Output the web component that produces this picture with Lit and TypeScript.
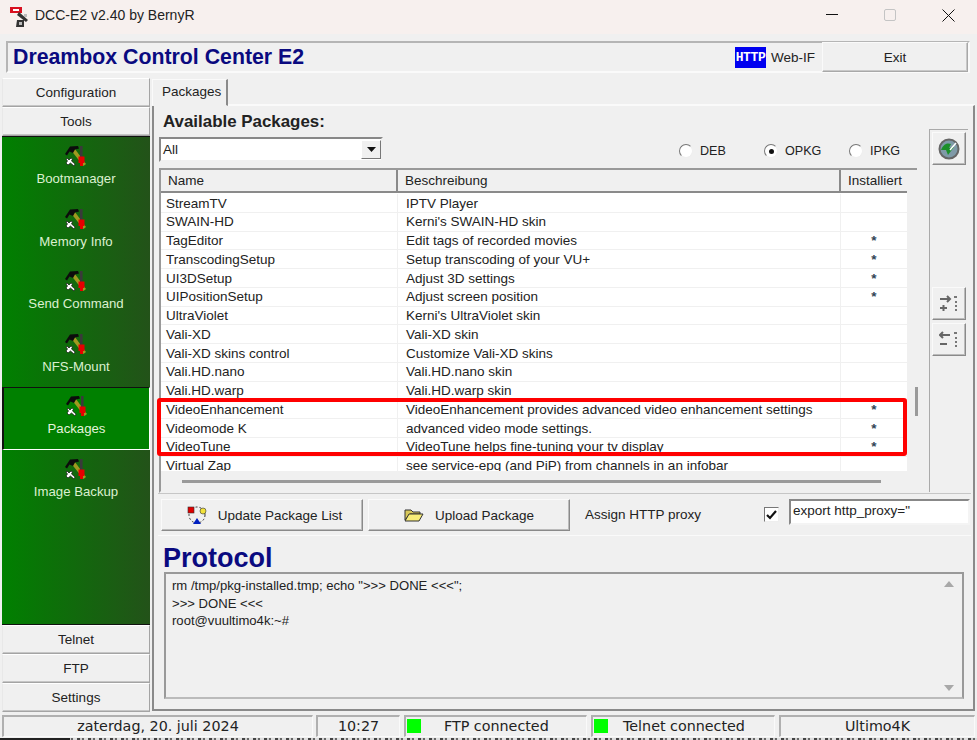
import { LitElement, html, css, svg } from "lit";
import { customElement } from "lit/decorators.js";

const rows: [string, string, string][] = [
  ["StreamTV", "IPTV Player", ""],
  ["SWAIN-HD", "Kerni's SWAIN-HD skin", ""],
  ["TagEditor", "Edit tags of recorded movies", "*"],
  ["TranscodingSetup", "Setup transcoding of your VU+", "*"],
  ["UI3DSetup", "Adjust 3D settings", "*"],
  ["UIPositionSetup", "Adjust screen position", "*"],
  ["UltraViolet", "Kerni's UltraViolet skin", ""],
  ["Vali-XD", "Vali-XD skin", ""],
  ["Vali-XD skins control", "Customize Vali-XD skins", ""],
  ["Vali.HD.nano", "Vali.HD.nano skin", ""],
  ["Vali.HD.warp", "Vali.HD.warp skin", ""],
  ["VideoEnhancement", "VideoEnhancement provides advanced video enhancement settings", "*"],
  ["Videomode K", "advanced video mode settings.", "*"],
  ["VideoTune", "VideoTune helps fine-tuning your tv display", "*"],
  ["Virtual Zap", "see service-epg (and PiP) from channels in an infobar", ""],
];

const tools = ["Bootmanager", "Memory Info", "Send Command", "NFS-Mount", "Packages", "Image Backup"];

const toolIcon = svg`<svg class="tool-icon" width="22" height="21" viewBox="0 0 22 21">
  <path d="M5 3 L8.5 1 L21 18 L18.5 20 Z" fill="#a09a20"/>
  <path d="M0 8 L5 0.5 L13 0 L14 2.5 L10 3.5 L8 7 L4.5 5.5 L2 9.5 Z" fill="#0c0c0c"/>
  <rect x="15" y="0" width="2.6" height="11" fill="#3a3a3a"/>
  <path d="M13.5 10.5 H19.5 V17 H18 V20 H15 V17 H13.5 Z" fill="#e60000"/>
  <path d="M2 12 L4 14 L6 12 L7.5 13 L6.5 15 L10 18 L9 20 L5.5 17 L3 19 L1 17 L2.5 15 L1 13 Z" fill="#fff" stroke="#111" stroke-width="0.7"/>
</svg>`;

@customElement("app-root")
export class AppRoot extends LitElement {
  static styles = css`
    :host { display: block; width: 977px; height: 740px; overflow: hidden; background: #f0f0f0;
      font: 13.5px "Liberation Sans", Arial, sans-serif; color: #222; }
    * { box-sizing: border-box; }
    .titlebar { height: 34px; background: #f7f0ee; display: flex; align-items: center; padding-left: 10px; }
    .title { font-size: 14px; color: #222; margin-left: 5px; margin-top: -4px; }
    .app-icon { margin-top: -1px; }
    .wctl { margin-left: auto; display: flex; height: 34px; }
    .wctl span { width: 58px; display: flex; align-items: center; justify-content: center; padding-bottom: 4px; }
    .header { height: 32px; margin: 7px 7px 0 6px; border: 2px solid; border-color: #b5b5b5 #fafafa #fafafa #b5b5b5; display: flex; align-items: center; }
    .brand { font: bold 21.3px "Liberation Sans", Arial, sans-serif; color: #0a0a80; padding-left: 5px; margin-top: 1px; }
    .http { margin-left: auto; width: 31px; height: 21px; background: #0000f0; color: #fff; font: bold 13px "Liberation Sans Narrow", "Liberation Mono", monospace; display: flex; align-items: center; justify-content: center; letter-spacing: -0.4px; }
    .webif { width: 56px; padding-left: 5px; }
    .exit { width: 146px; height: 30px; background: #f0f0f0; border: 1px solid; border-color: #fafafa #a8a8a8 #a8a8a8 #fafafa; box-shadow: inset -1px -1px 0 #c8c8c8; display: flex; align-items: center; justify-content: center; }
    .body { display: flex; height: 633px; margin-top: 6px; padding-left: 2px; }
    .left { width: 148px; height: 634px; display: flex; flex-direction: column; margin-top: -1px; }
    .nav { height: 29px; flex: none; display: flex; align-items: center; justify-content: center; background: #f0f0f0; border: 1px solid; border-color: #fff #a4a4a4 #a4a4a4 #e8e8e8; box-shadow: inset 0 -1px 0 #c6c6c6; }
    .green { flex: 1; border-top: 1px solid #111; border-bottom: 1px solid #111; background: linear-gradient(90deg, #008000, #235219); display: flex; flex-direction: column; min-height: 0; }
    .tool { height: 62.6px; flex: none; display: flex; flex-direction: column; align-items: center; color: #dcf0d0; padding-top: 9px; gap: 4px; font-size: 13.2px; }
    .tool.on { background: #008000; border: 1px solid; border-color: #111 #fff #fff #111; border-left-width: 2px; padding-top: 8px; color: #e4f4dc; }
    .right { width: 823px; margin-left: 2px; display: flex; flex-direction: column; }
    .tabs { height: 26px; flex: none; display: flex; border-bottom: 1px solid #fafafa; }
    .tab { width: 76px; height: 27px; padding-left: 9px; display: flex; align-items: center; background: #f0f0f0; border: 1px solid; border-color: #fafafa #8a8a8a transparent #fafafa; border-right-width: 2px; padding-bottom: 2px; z-index: 1; }
    .page { height: 606px; border: 2px solid; border-color: #fafafa #8a8a8a #8a8a8a #8a8a8a; border-top-width: 1px; display: flex; flex-direction: column; padding: 0 0 0 4px; }
    .content { flex: none; height: 387px; display: flex; }
    .main { width: 771px; flex: none; }
    .avail { font: bold 16.9px "Liberation Sans", Arial, sans-serif; color: #222; height: 30px; display: flex; align-items: center; padding: 2px 0 0 5px; }
    .filter { display: flex; align-items: center; height: 26px; }
    .combo { width: 224px; flex: none; height: 25px; margin-left: 1px; background: #fff; border: 2px solid; border-color: #888 #f0f0f0 #f0f0f0 #888; display: flex; align-items: center; padding-left: 2px; }
    .arrow { margin-left: auto; width: 20px; height: 19px; background: #f0f0f0; border: 1px solid; border-color: #fff #777 #777 #fff; display: flex; align-items: center; justify-content: center; }
    .radios { margin-left: 296px; display: flex; flex: none; padding-top: 4px; font-size: 12.6px; }
    .radio { display: flex; align-items: center; width: 85px; flex: none; gap: 7px; }
    .radio:last-child { width: 60px; }
    .radio i { width: 14px; height: 14px; border-radius: 50%; background: #fff; border: 1px solid; border-color: #777 #eee #eee #777; display: flex; align-items: center; justify-content: center; }
    .radio i b { width: 5px; height: 5px; background: #111; border-radius: 50%; }
    .grid { position: relative; width: 758px; height: 325px; margin: 6px 0 0 1px; border: 2px solid; border-color: #999 #f0f0f0 #f0f0f0 #999; border-right: none; }
    .gh { display: flex; height: 23px; background: #f0f0f0; }
    .gh span { display: flex; align-items: center; padding-left: 7px; border-right: 2px solid #8a8a8a; border-bottom: 2px solid #8a8a8a; }
    .c1 { width: 237px; flex: none; } .c2 { width: 443px; flex: none; } .c3 { width: 66px; flex: none; }
    .gh .c3 { border-right: none; padding-left: 7px; }
    .gb { height: 278px; padding-top: 1.2px; overflow: hidden; background: #fff; width: 746px; }
    .gr { display: flex; height: 18.75px; border-bottom: 1px solid #f0f0f0; }
    .gr span { display: flex; align-items: center; white-space: nowrap; padding-left: 5px; border-right: 1px solid #f0f0f0; }
    .gr .c2 { padding-left: 8px; }
    .gr .c3 { border: none; justify-content: center; padding: 0; color: #345; font-weight: bold; }
    .hbar { height: 3px; margin: 9px 0 0 21px; width: 699px; background: #9a9a9a; }
    .vthumb { position: absolute; left: 754px; top: 217px; width: 3px; height: 29px; background: #9a9a9a; }
    .mark { position: absolute; left: -4px; top: 228px; width: 750px; height: 58px; border: 4px solid #f00; border-radius: 3px; }
    .side { width: 39px; height: 363px; margin-top: 23px; border: 1px solid #aaa; border-bottom: none; border-right: none; padding: 2px 0 0 2px; display: flex; flex-direction: column; }
    .sbtn { width: 34px; height: 33px; flex: none; background: #f0f0f0; border: 1px solid; border-color: #fafafa #8a8a8a #8a8a8a #fafafa; box-shadow: inset -1px -1px 0 #bbb; display: flex; align-items: center; justify-content: center; }
    .side .plus { margin-top: 122px; }
    .side .minus { margin-top: 3px; }
    .actions { flex: none; height: 43px; display: flex; align-items: center; padding-left: 3px; border-top: 1px solid #c6c6c6; border-bottom: 1px solid #fafafa; margin-right: 2px; }
    .btn { width: 202px; height: 32px; margin-top: 1px; flex: none; background: #f0f0f0; border: 1px solid; border-color: #fafafa #8a8a8a #8a8a8a #fafafa; box-shadow: inset -1px -1px 0 #bbb; display: flex; align-items: center; justify-content: center; gap: 11px; margin-right: 5px; }
    .btn.first { padding-left: 5px; }
    .proxy { margin-left: 10px; width: 179px; flex: none; }
    .check { width: 15px; height: 15px; flex: none; background: #fff; border: 1px solid; border-color: #777 #eee #eee #777; display: flex; align-items: center; justify-content: center; }
    .input { width: 181px; height: 26px; flex: none; margin-left: 10px; margin-top: -5px; background: #fff; border: 2px solid; border-color: #888 #f4f4f4 #f4f4f4 #888; padding: 0 0 3px 2px; display: flex; align-items: center; }
    .proto { flex: 1; margin: 4px 0 0 0; display: flex; flex-direction: column; }
    .proto h2 { margin: 0; height: 32px; font: bold 27px "Liberation Sans", Arial, sans-serif; color: #0a0a80; padding-left: 5px; line-height: 37px; flex: none; }
    .memo { height: 127px; margin: 0 0 0 6px; width: 800px; border: 2px solid; border-color: #999 #999 #bbb #999; padding: 3px 6px; position: relative; font-size: 13.1px; line-height: 17.6px; }
    .sb { position: absolute; right: 7px; top: 7px; bottom: 6px; width: 12px; display: flex; flex-direction: column; justify-content: space-between; align-items: center; }
    .status { display: flex; height: 22px; margin-top: 3px; padding-left: 2px; font: 14.3px "DejaVu Sans", sans-serif; }
    .cell { display: flex; align-items: center; justify-content: center; border: 1px solid; border-color: #b0b0b0 #fafafa #fafafa #b0b0b0; border-top-width: 2px; border-left-width: 2px; flex: none; padding-bottom: 1px; }
    .date { width: 311px; margin-right: 3px; }
    .time { width: 84px; margin-right: 4px; }
    .ftp { width: 183px; margin-right: 4px; }
    .tel { width: 184px; margin-right: 4px; }
    .dev { width: 196px; }
    .led { width: 14px; height: 14px; background: #00ff00; margin-left: 1px; flex: none; }
    .ledcell { justify-content: flex-start; gap: 15px; }
    .ftp { gap: 23px; }
    .strip { height: 4px; margin-top: 1px; background: linear-gradient(90deg, #222 0 70px, transparent 70px), repeating-linear-gradient(90deg, #444 0 3px, #ccc 3px 5px, #666 5px 7px, #ddd 7px 11px); }
  `;

  render() {
    return html`
      <div class="titlebar">
        <svg class="app-icon" width="20" height="22" viewBox="0 0 20 22">
          <rect x="0" y="1" width="12" height="6" fill="#d81020"/><rect x="3" y="3" width="6" height="2" fill="#fff"/>
          <path d="M9 6 L18 14 L16 16 L7 9 Z M7 14 h7 v7 h-8 z" fill="#333"/>
          <path d="M9 16 h3 v3 h-3 z M14 8 h3 v3 h-3 z" fill="#bbb"/>
        </svg>
        <span class="title">DCC-E2 v2.40 by BernyR</span>
        <div class="wctl">
          <span><svg width="12" height="2" viewBox="0 0 12 2"><rect width="12" height="1" fill="#111"/></svg></span>
          <span><svg width="12" height="12" viewBox="0 0 12 12"><rect x=".5" y=".5" width="11" height="11" rx="1.5" fill="none" stroke="#c4c4c4"/></svg></span>
          <span><svg width="13" height="13" viewBox="0 0 13 13"><path d="M.5 .5 L12.5 12.5 M12.5 .5 L.5 12.5" stroke="#111" stroke-width="1"/></svg></span>
        </div>
      </div>
      <div class="header">
        <span class="brand">Dreambox Control Center E2</span>
        <span class="http">HTTP</span>
        <span class="webif">Web-IF</span>
        <span class="exit">Exit</span>
      </div>
      <div class="body">
        <div class="left">
          <div class="nav">Configuration</div>
          <div class="nav">Tools</div>
          <div class="green">
            ${tools.map((t) => html`<div class="tool ${t === "Packages" ? "on" : ""}">${toolIcon}<span>${t}</span></div>`)}
          </div>
          <div class="nav">Telnet</div>
          <div class="nav">FTP</div>
          <div class="nav">Settings</div>
        </div>
        <div class="right">
          <div class="tabs"><div class="tab">Packages</div></div>
          <div class="page">
            <div class="content">
              <div class="main">
                <div class="avail">Available Packages:</div>
                <div class="filter">
                  <div class="combo">All<span class="arrow"><svg width="9" height="5" viewBox="0 0 9 5"><path d="M0 0 H9 L4.5 5 Z" fill="#111"/></svg></span></div>
                  <div class="radios">
                    <label class="radio"><i></i>DEB</label>
                    <label class="radio"><i><b></b></i>OPKG</label>
                    <label class="radio"><i></i>IPKG</label>
                  </div>
                </div>
                <div class="grid">
                  <div class="gh"><span class="c1">Name</span><span class="c2">Beschreibung</span><span class="c3">Installiert</span></div>
                  <div class="gb">
                    ${rows.map((r) => html`<div class="gr"><span class="c1">${r[0]}</span><span class="c2">${r[1]}</span><span class="c3">${r[2]}</span></div>`)}
                  </div>
                  <div class="hbar"></div>
                  <div class="vthumb"></div>
                  <div class="mark"></div>
                </div>
              </div>
              <div class="side">
                <div class="sbtn">
                  <svg width="22" height="22" viewBox="0 0 22 22"><circle cx="11" cy="11" r="9.5" fill="#7f9aa8" stroke="#666" stroke-width="2"/><path d="M3 12 C6 5 10 5 13 6 L11 10 L16 9 L10 17 L8 12 Z" fill="#1c8f2a"/><path d="M12 12 L18 5" stroke="#fff" stroke-width="1.5"/></svg>
                </div>
                <div class="sbtn plus">
                  <svg width="20" height="18" viewBox="0 0 20 18"><path d="M1 4 H11 M8 1 L11 4 L8 7 M1 13 H8 M4.5 10 V16" stroke="#666" stroke-width="2" fill="none"/><path d="M15 1 h3 v2 h-3 z M16 6 h2 v2 h-2 z M16 10 h2 v2 h-2 z M16 14 h2 v2 h-2 z" fill="#777"/></svg>
                </div>
                <div class="sbtn minus">
                  <svg width="20" height="18" viewBox="0 0 20 18"><path d="M11 4 H1 M4 1 L1 4 L4 7 M1 13 H8" stroke="#666" stroke-width="2" fill="none"/><path d="M15 1 h3 v2 h-3 z M16 6 h2 v2 h-2 z M16 10 h2 v2 h-2 z M16 14 h2 v2 h-2 z" fill="#777"/></svg>
                </div>
              </div>
            </div>
            <div class="actions">
              <div class="btn first">
                <svg width="20" height="20" viewBox="0 0 20 20"><circle cx="10" cy="10" r="8" fill="none" stroke="#333" stroke-dasharray="2 2"/><rect x="1" y="2" width="6" height="6" fill="#e00000" stroke="#333" stroke-width=".6"/><circle cx="16" cy="6" r="3" fill="#f2e23a" stroke="#333" stroke-width=".6"/><path d="M6 19 L10 13 L14 19 Z" fill="#0020c0"/></svg>
                Update Package List
              </div>
              <div class="btn">
                <svg width="20" height="14" viewBox="0 0 20 14"><path d="M1 2 H7 L9 4 H16 V6 H6 L1 12 Z" fill="#d8c85a" stroke="#333"/><path d="M1 13 L5 6 H19 L15 13 Z" fill="#f7ec78" stroke="#333"/></svg>
                Upload Package
              </div>
              <span class="proxy">Assign HTTP proxy</span>
              <span class="check"><svg width="11" height="10" viewBox="0 0 11 10"><path d="M1 5 L4 8 L10 1" stroke="#111" stroke-width="2.2" fill="none"/></svg></span>
              <div class="input">export http_proxy="</div>
            </div>
            <div class="proto">
              <h2>Protocol</h2>
              <div class="memo">
                <div>rm /tmp/pkg-installed.tmp; echo "&gt;&gt;&gt; DONE &lt;&lt;&lt;";</div>
                <div>&gt;&gt;&gt; DONE &lt;&lt;&lt;</div>
                <div>root@vuultimo4k:~#</div>
                <div class="sb">
                  <svg width="10" height="6" viewBox="0 0 10 6"><path d="M0 6 H10 L5 0 Z" fill="#a8a8a8"/></svg>
                  <svg width="10" height="6" viewBox="0 0 10 6"><path d="M0 0 H10 L5 6 Z" fill="#a8a8a8"/></svg>
                </div>
              </div>
            </div>
          </div>
        </div>
      </div>
      <div class="status">
        <div class="cell date">zaterdag, 20. juli 2024</div>
        <div class="cell time">10:27</div>
        <div class="cell ledcell ftp"><span class="led"></span>FTP connected</div>
        <div class="cell ledcell tel"><span class="led"></span>Telnet connected</div>
        <div class="cell dev">Ultimo4K</div>
      </div>
      <div class="strip"></div>
    `;
  }
}
